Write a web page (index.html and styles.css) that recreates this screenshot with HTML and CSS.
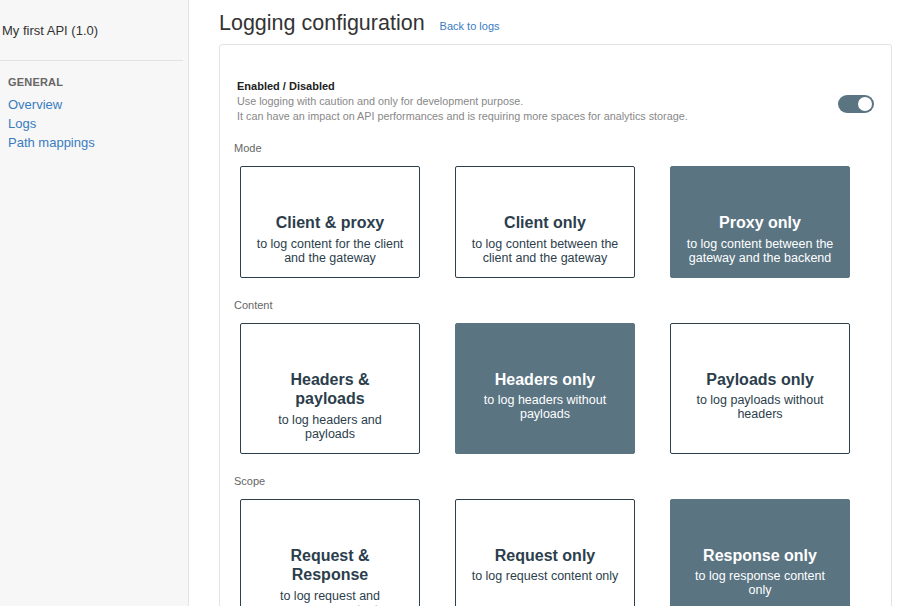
FILE: index.html
```html
<!DOCTYPE html>
<html>
<head>
<meta charset="utf-8">
<link rel="stylesheet" href="styles.css">
</head>
<body>
<div class="layout">
  <aside class="sidebar">
    <div class="api-name">My first API (1.0)</div>
    <div class="divider"></div>
    <div class="section-title">GENERAL</div>
    <nav class="nav">
      <a href="#">Overview</a>
      <a href="#">Logs</a>
      <a href="#">Path mappings</a>
    </nav>
  </aside>
  <main class="main">
    <div class="header">
      <h1 class="title">Logging configuration</h1>
      <a class="back" href="#">Back to logs</a>
    </div>
    <section class="panel">
      <div class="enable-row">
        <div class="enable-text">
          <div class="enable-title">Enabled / Disabled</div>
          <div class="enable-desc">Use logging with caution and only for development purpose.</div>
          <div class="enable-desc">It can have an impact on API performances and is requiring more spaces for analytics storage.</div>
        </div>
        <div class="toggle"><span class="knob"></span></div>
      </div>

      <div class="group-label">Mode</div>
      <div class="options">
        <div class="option">
          <div class="opt-title">Client &amp; proxy</div>
          <div class="opt-sub">to log content for the client and the gateway</div>
        </div>
        <div class="option">
          <div class="opt-title">Client only</div>
          <div class="opt-sub">to log content between the client and the gateway</div>
        </div>
        <div class="option selected">
          <div class="opt-title">Proxy only</div>
          <div class="opt-sub">to log content between the gateway and the backend</div>
        </div>
      </div>

      <div class="group-label">Content</div>
      <div class="options">
        <div class="option">
          <div class="opt-title">Headers &amp; payloads</div>
          <div class="opt-sub">to log headers and payloads</div>
        </div>
        <div class="option selected">
          <div class="opt-title">Headers only</div>
          <div class="opt-sub">to log headers without payloads</div>
        </div>
        <div class="option">
          <div class="opt-title">Payloads only</div>
          <div class="opt-sub">to log payloads without headers</div>
        </div>
      </div>

      <div class="group-label">Scope</div>
      <div class="options">
        <div class="option">
          <div class="opt-title">Request &amp; Response</div>
          <div class="opt-sub">to log request and response content</div>
        </div>
        <div class="option">
          <div class="opt-title">Request only</div>
          <div class="opt-sub">to log request content only</div>
        </div>
        <div class="option selected">
          <div class="opt-title">Response only</div>
          <div class="opt-sub">to log response content only</div>
        </div>
      </div>
    </section>
  </main>
</div>
</body>
</html>
```

FILE: styles.css
```css
html, body {
  margin: 0;
  padding: 0;
  height: 100%;
  background: #ffffff;
  font-family: "Liberation Sans", Arial, sans-serif;
  color: #333333;
  overflow: hidden;
}

.layout {
  display: flex;
  height: 606px;
}

.sidebar {
  width: 188px;
  flex: 0 0 188px;
  background: #f7f7f7;
  border-right: 1px solid #e3e3e3;
  box-sizing: content-box;
}

.api-name {
  font-size: 13px;
  line-height: 18px;
  padding: 22px 0 0 2px;
  color: #333;
}

.divider {
  height: 1px;
  background: #e2e2e2;
  margin: 20px 5px 0 0;
}

.section-title {
  font-size: 11px;
  font-weight: bold;
  color: #666;
  line-height: 14px;
  padding: 14px 0 0 8px;
  letter-spacing: 0.2px;
}

.nav {
  display: flex;
  flex-direction: column;
  padding: 6px 0 0 8px;
}

.nav a {
  font-size: 13px;
  line-height: 19px;
  color: #3a7cbf;
  text-decoration: none;
}

.main {
  flex: 1;
  padding: 11px 15px 0 30px;
  min-width: 0;
}

.header {
  display: flex;
  align-items: baseline;
  gap: 15px;
}

.title {
  margin: 0;
  font-size: 21.5px;
  font-weight: normal;
  line-height: 25px;
  color: #333;
}

.back {
  font-size: 11px;
  color: #3a7cbf;
  text-decoration: none;
}

.panel {
  margin-top: 8px;
  border: 1px solid #e3e3e3;
  border-radius: 3px;
  padding: 34px 17px 40px 17px;
  background: #fff;
}

.enable-row {
  display: flex;
  align-items: center;
  justify-content: space-between;
}

.enable-title {
  font-size: 11px;
  font-weight: bold;
  line-height: 15px;
  color: #222;
}

.enable-desc {
  font-size: 10.8px;
  line-height: 15px;
  color: #888;
}

.toggle {
  width: 36px;
  height: 18px;
  border-radius: 9px;
  background: #5a7482;
  position: relative;
  margin-top: 4px;
}

.knob {
  position: absolute;
  right: 2px;
  top: 2px;
  width: 14px;
  height: 14px;
  border-radius: 50%;
  background: #fff;
}

.group-label {
  font-size: 11px;
  line-height: 13px;
  color: #666;
  margin: 18px 0 0 -3px;
}

.options + .group-label {
  margin-top: 21px;
}

.options {
  display: grid;
  grid-template-columns: 180px 180px 180px;
  column-gap: 35px;
  margin: 11px 0 0 3px;
}

.option {
  border: 1px solid #2c3f4b;
  border-radius: 2px;
  padding: 46px 15px 12px;
  text-align: center;
  color: #2c3e4c;
  background: #fff;
}

.option.selected {
  background: #5a7482;
  border-color: #5a7482;
  color: #fff;
}

.opt-title {
  font-size: 16px;
  font-weight: bold;
  line-height: 19.5px;
  margin-bottom: 4px;
}

.opt-sub {
  font-size: 12.5px;
  line-height: 14px;
}
```
